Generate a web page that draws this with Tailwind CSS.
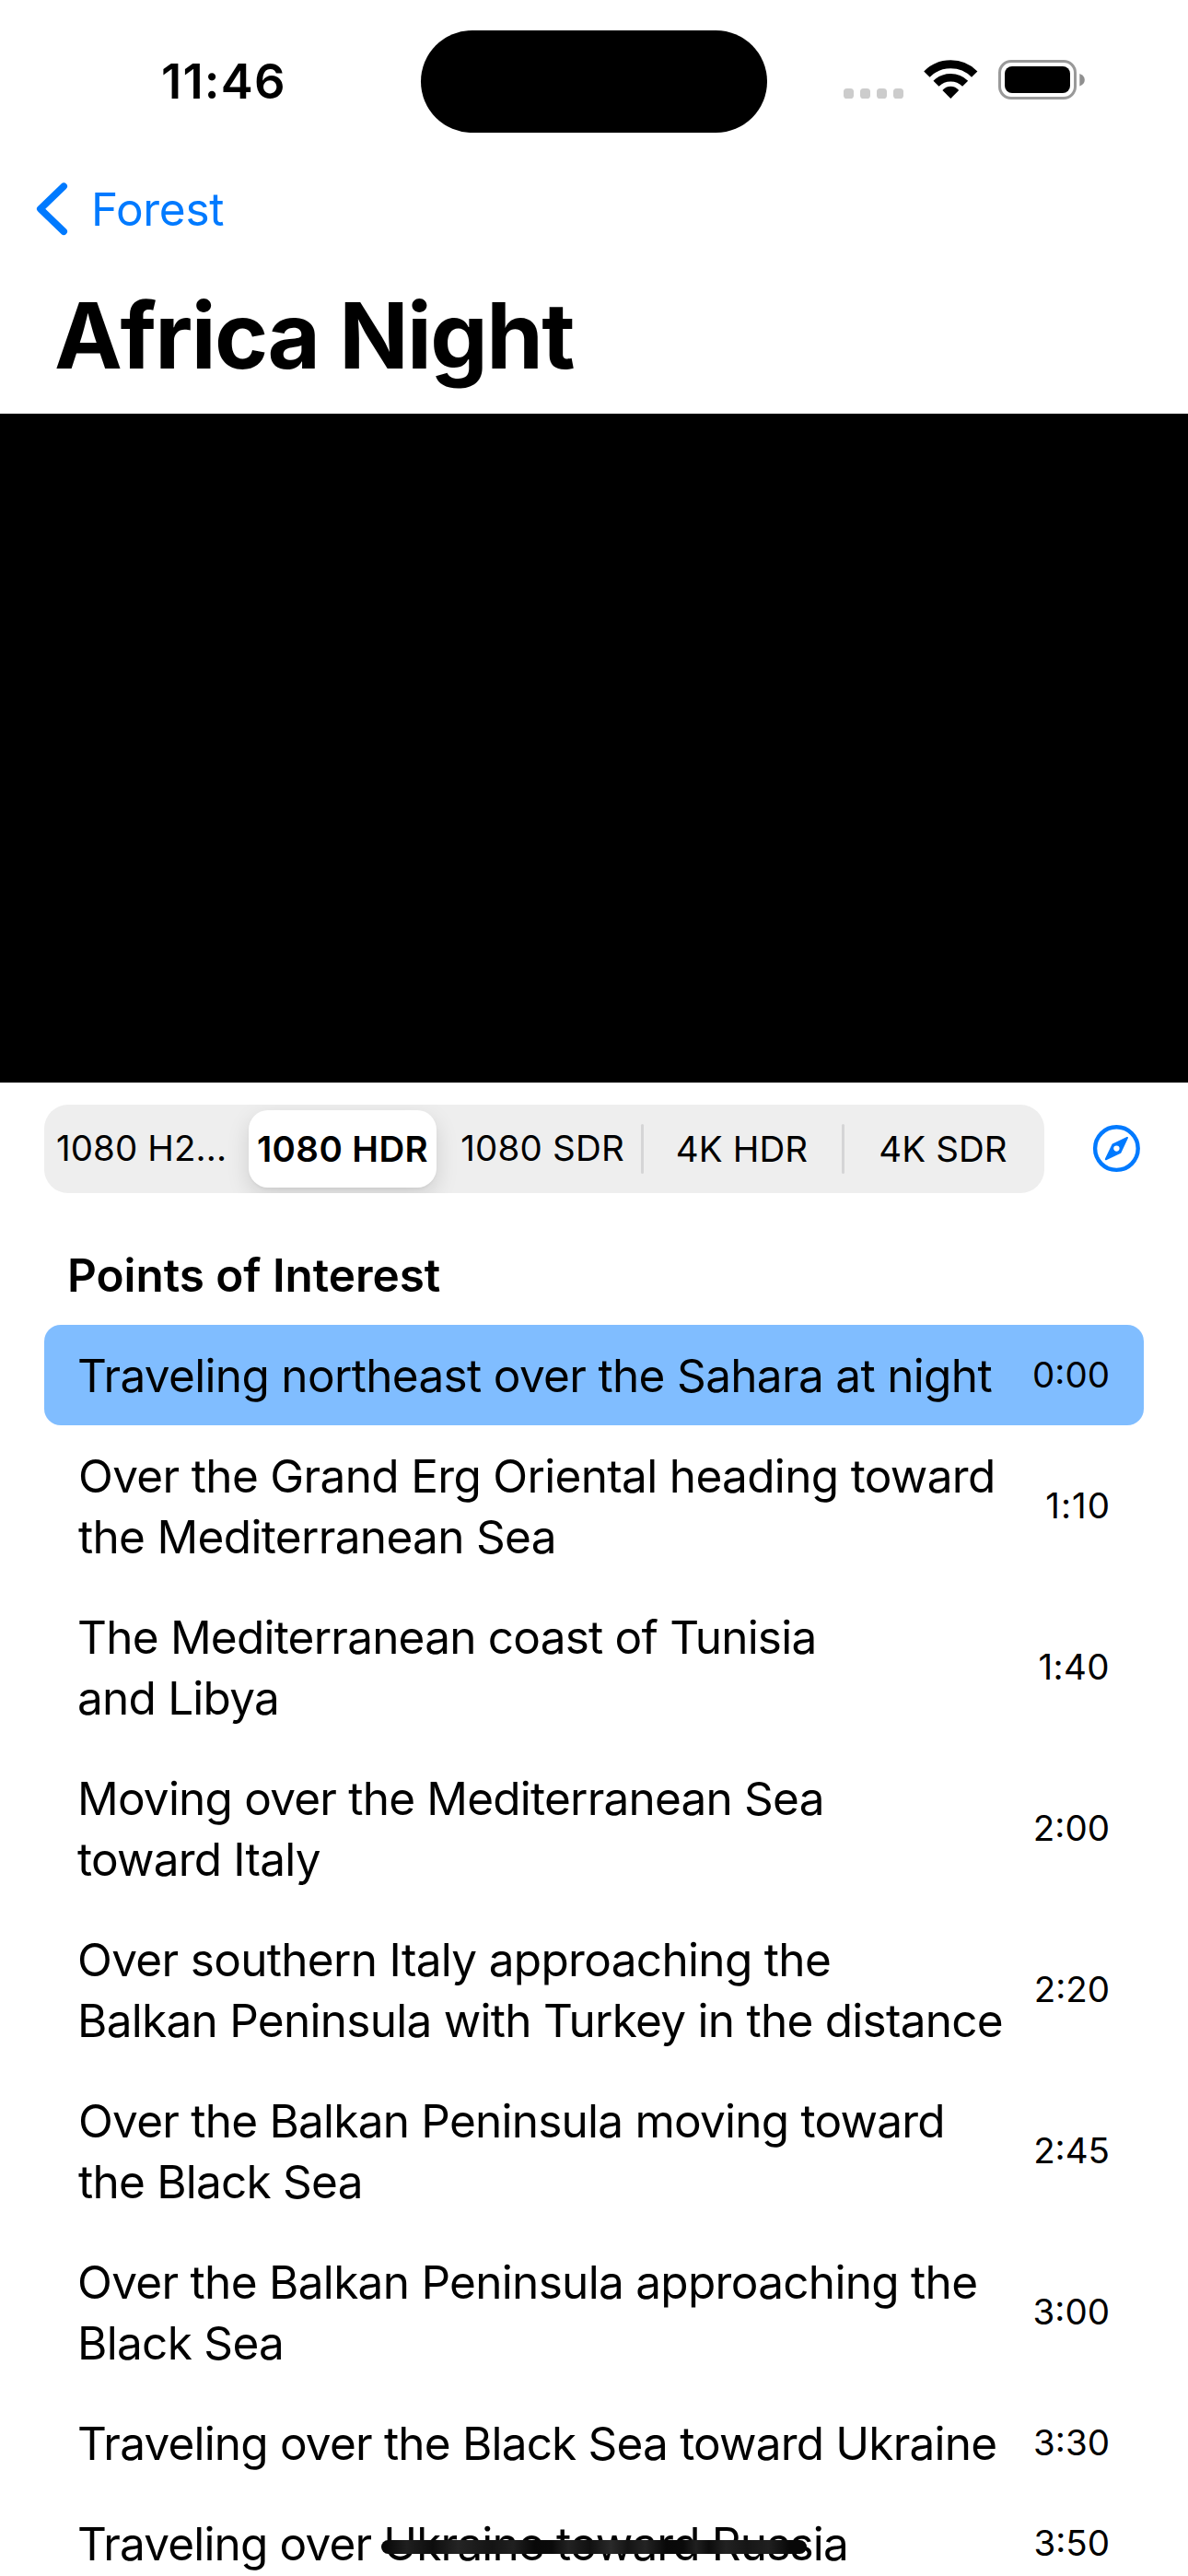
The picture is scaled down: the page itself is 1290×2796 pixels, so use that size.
<!DOCTYPE html>
<html lang="en">
<head>
<meta charset="utf-8">
<title>Africa Night</title>
<script src="https://cdn.jsdelivr.net/npm/@tailwindcss/browser@4"></script>
</head>
<body class="bg-white">
<div class="relative w-[1290px] h-[2796px] overflow-hidden bg-white text-black font-['Inter',sans-serif]">

  <!-- Status bar -->
  <header class="grid grid-cols-[457px_376px_457px] h-[177px]">
    <div class="pt-[55px] pl-[175px] text-[52.5px] leading-[66px] font-semibold tracking-[1.2px] whitespace-nowrap">11:46</div>
    <div class="mt-[33px] h-[111px] rounded-full bg-black"></div>
    <div class="pt-[60px] pl-[80px]">
      <svg width="270" height="50" viewBox="913 60 270 50">
        <g fill="#cccccc">
          <rect x="916" y="96" width="11" height="11" rx="3.6"/>
          <rect x="934" y="96" width="11" height="11" rx="3.6"/>
          <rect x="952" y="96" width="11" height="11" rx="3.6"/>
          <rect x="970" y="96" width="11" height="11" rx="3.6"/>
        </g>
        <g fill="none" stroke="#000">
          <path stroke-width="9" d="M1006.4 80.6A36.6 36.6 0 0 1 1058.2 80.6"/>
          <path stroke-width="8.6" d="M1016.5 90.7A22.4 22.4 0 0 1 1048.1 90.7"/>
        </g>
        <path d="M1032.3 107L1023.4 98.1Q1027 93.7 1032.3 93.7T1041.2 98.1Z"/>
        <rect x="1085.5" y="66.5" width="82" height="40" rx="12.5" fill="none" stroke="#999999" stroke-width="3"/>
        <rect x="1091" y="72" width="71" height="29" rx="8"/>
        <path fill="#8f8f8f" d="M1172.3 80Q1177.8 82 1177.8 86.7T1172.3 93.4Z"/>
      </svg>
    </div>
  </header>

  <!-- Back button -->
  <nav class="flex items-center h-[100px] text-[#007aff]">
    <svg class="ml-[36px]" width="40" height="60" viewBox="36 197 40 60" fill="none" stroke="#007aff" stroke-width="7.6" stroke-linecap="round" stroke-linejoin="round"><path d="M69.2 202.2L43.8 226.7L69.2 251.3"/></svg>
    <span class="ml-[23px] text-[49.5px] leading-[66px] tracking-[-0.3px]">Forest</span>
  </nav>

  <h1 class="pt-[27px] h-[172px] pl-[59px] text-[99px] leading-[120px] font-bold tracking-[-1.6px] whitespace-nowrap">Africa Night</h1>

  <!-- Video -->
  <div class="h-[726px] bg-black"></div>

  <!-- Quality picker -->
  <div class="flex items-center pt-[24px] pl-[48px]">
    <div class="grid grid-cols-[211px_226px_212px_218px_219px] items-center w-[1086px] h-[96px] rounded-[26px] overflow-hidden bg-[#eeeeee] text-[38.5px] text-center whitespace-nowrap">
      <div class="tracking-[0.1px]">1080 H2...</div>
      <div class="w-[204px] h-[84px] leading-[84px] mx-auto rounded-[21px] bg-white font-[560] tracking-[0.4px] shadow-[0_9px_24px_rgba(0,0,0,0.13),0_2px_3px_rgba(0,0,0,0.04)]">1080 HDR</div>
      <div class="pr-1 tracking-[0.2px]">1080 SDR</div>
      <div class="-ml-px h-[54px] leading-[54px] flex"><i class="w-[3px] h-full rounded-full bg-[#d5d5d6]"></i><span class="flex-1 pr-[3px] tracking-[0.1px]">4K HDR</span></div>
      <div class="-ml-px h-[54px] leading-[54px] flex"><i class="w-[3px] h-full rounded-full bg-[#d5d5d6]"></i><span class="flex-1 pr-[3px] tracking-[0.1px]">4K SDR</span></div>
    </div>
    <svg class="ml-[48px]" width="60" height="60" viewBox="1182 1217 60 60">
      <circle cx="1212.4" cy="1246.6" r="23.3" fill="none" stroke="#007aff" stroke-width="4.4"/>
      <path fill="#007aff" stroke="#007aff" stroke-width="2" stroke-linejoin="round" fill-rule="evenodd" d="M1224 1234.9L1208.4 1242.4L1200.8 1258.3L1216.5 1250.8ZM1212.4 1242.4a4.2 4.2 0 1 1 0 8.4a4.2 4.2 0 0 1 0-8.4Z"/>
    </svg>
  </div>

  <h2 class="pt-[56px] h-[143px] pl-[73px] text-[49.5px] leading-[66px] font-semibold tracking-[-0.06px]">Points of Interest</h2>

  <!-- Points of interest -->
  <ul class="mx-[48px] text-[49.5px] leading-[66px] whitespace-nowrap">
    <li class="flex items-center justify-between h-[109px] pl-[36px] pr-[37px] rounded-[18px] bg-[#80bdff]"><p class="tracking-[-0.67px]">Traveling northeast over the Sahara at night</p><span class="pb-px text-[38.5px]">0:00</span></li>
    <li class="flex items-center justify-between h-[175px] pl-[37px] pr-[36px]"><p class="tracking-[-0.67px]">Over the Grand Erg Oriental heading toward<br>the Mediterranean Sea</p><span class="pb-[2px] text-[38.5px] tracking-[1px]">1:10</span></li>
    <li class="flex items-center justify-between h-[175px] pl-[36px] pr-[37px]"><p class="tracking-[-0.78px]">The Mediterranean coast of Tunisia<br>and Libya</p><span class="pb-[2px] text-[38.5px] tracking-[0.4px]">1:40</span></li>
    <li class="flex items-center justify-between h-[175px] pl-[36px] pr-[37px]"><p class="tracking-[-0.79px]">Moving over the Mediterranean Sea<br>toward Italy</p><span class="pb-[2px] text-[38.5px]">2:00</span></li>
    <li class="flex items-center justify-between h-[175px] pl-[36px] pr-[37px]"><p class="tracking-[-0.73px]"><span class="tracking-[-0.68px]">Over southern Italy approaching the</span><br>Balkan Peninsula with Turkey in the distance</p><span class="pb-[2px] text-[38.5px]">2:20</span></li>
    <li class="flex items-center justify-between h-[175px] pl-[37px] pr-[37px]"><p class="tracking-[-0.77px]">Over the Balkan Peninsula moving toward<br>the Black Sea</p><span class="pb-[2px] text-[38.5px]">2:45</span></li>
    <li class="flex items-center justify-between h-[175px] pl-[36px] pr-[37px]"><p class="tracking-[-0.7px]">Over the Balkan Peninsula approaching the<br>Black Sea</p><span class="pb-[2px] text-[38.5px]">3:00</span></li>
    <li class="flex items-center justify-between h-[109px] pl-[36px] pr-[37px]"><p class="tracking-[-0.81px]">Traveling over the Black Sea toward Ukraine</p><span class="pb-px text-[38.5px]">3:30</span></li>
    <li class="flex items-center justify-between h-[109px] pl-[36px] pr-[37px]"><p class="tracking-[-0.85px]">Traveling over Ukraine toward Russia</p><span class="pb-px text-[38.5px]">3:50</span></li>
  </ul>

  <!-- Home indicator -->
  <div class="absolute left-[414px] top-[2757px] w-[462px] h-[15px] rounded-full bg-linear-[90deg,#080808_1%,#1f1f1f_6%,#0d0d0d_12%,#242424_18%,#141414_26%,#202020_31%,#080808_36%,#0a0a0a_40%,#222222_44%,#101010_49%,#2a2a2a_54%,#141414_58%,#242424_62%,#080808_67%,#0a0a0a_71%,#202020_74%,#0c0c0c_77%,#222222_81%,#161616_86%,#202020_91%,#080808_96%]"></div>
</div>
</body>
</html>
